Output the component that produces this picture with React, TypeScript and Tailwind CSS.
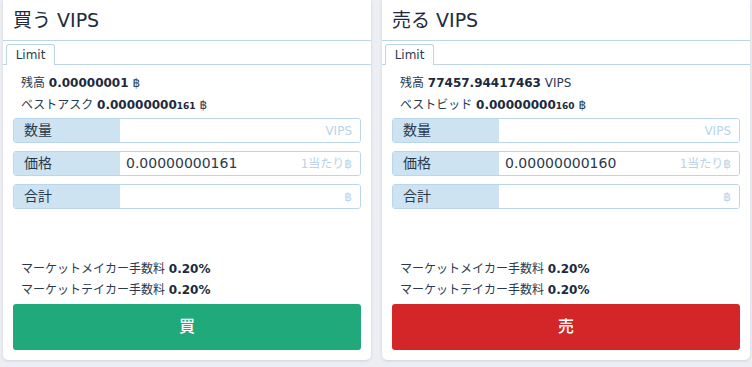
import React from 'react';

interface Field {
  label: string;
  value?: string;
  suffix: string;
}

interface PanelProps {
  title: string;
  balance: React.ReactNode;
  bestLabel: string;
  bestMain: string;
  bestSmall: string;
  price: string;
  action: string;
  buttonClass: string;
}

const Baht = () => <span className="font-normal text-[#2b3a4d]">฿</span>;

const InputRow: React.FC<{ field: Field }> = ({ field }) => (
  <div className="flex h-[25px] rounded-[3px] border border-[#bad6eb] overflow-hidden">
    <div className="w-[106px] shrink-0 bg-[#cde3f2] pl-[10px] flex items-center text-[14px] text-[#2a3a4e]">
      {field.label}
    </div>
    <div className="flex-1 flex items-center justify-between pl-[6px] pr-[8px] bg-white">
      <span className="text-[14px] text-[#2a3a4e]">{field.value ?? ''}</span>
      <span className="text-[12px] text-[#b8d3e8]">{field.suffix}</span>
    </div>
  </div>
);

const TradePanel: React.FC<PanelProps> = ({ title, balance, bestLabel, bestMain, bestSmall, price, action, buttonClass }) => {
  const fields: Field[] = [
    { label: '数量', suffix: 'VIPS' },
    { label: '価格', value: price, suffix: '1当たり฿' },
    { label: '合計', suffix: '฿' },
  ];

  return (
    <div className="flex-1 bg-white rounded-b-[5px] shadow-[0_1px_3px_rgba(40,50,80,0.15)] flex flex-col">
      <div className="h-[41px] border-b border-[#bcd6e8] flex items-center pl-[10px] text-[19px] text-[#1e2b3c]">
        {title}
      </div>
      <div className="pt-[3px] px-[3px] border-b border-[#bcd6e8] flex">
        <div className="h-[21px] w-[49px] -mb-px bg-white border border-b-0 border-[#bcd6e8] rounded-t-[3px] flex items-center justify-center text-[12px] text-[#2a3a4e]">
          Limit
        </div>
      </div>
      <div className="px-[10px] pt-[7px] pb-[10px]">
        <div className="pl-[8px] text-[12px] leading-[22px] text-[#2a3a4e]">
          <div>残高 {balance}</div>
          <div>
            {bestLabel} <span className="font-bold text-[#1c2a3c]">{bestMain}<span className="text-[9px]">{bestSmall}</span></span> <Baht />
          </div>
        </div>
        <div className="mt-[1px] flex flex-col gap-[8px]">
          {fields.map(f => (
            <InputRow key={f.label} field={f} />
          ))}
        </div>
        <div className="mt-[50px] pl-[8px] text-[12px] leading-[21px] text-[#2a3a4e]">
          <div>マーケットメイカー手数料 <span className="font-bold text-[#1c2a3c]">0.20%</span></div>
          <div>マーケットテイカー手数料 <span className="font-bold text-[#1c2a3c]">0.20%</span></div>
        </div>
        <button className={`mt-[3px] w-full h-[46px] rounded-[3px] text-white text-[16px] font-medium ${buttonClass}`}>
          {action}
        </button>
      </div>
    </div>
  );
};

export default function App() {
  return (
    <div
      className="w-[752px] h-[367px] bg-[#eceef4] flex gap-[11px] pl-[3px] pr-[2px] items-start overflow-hidden"
      style={{ fontFamily: '"DejaVu Sans", "Noto Sans CJK JP", sans-serif' }}
    >
      <TradePanel
        title="買う VIPS"
        balance={<><span className="font-bold text-[#1c2a3c]">0.00000001</span> <Baht /></>}
        bestLabel="ベストアスク"
        bestMain="0.00000000"
        bestSmall="161"
        price="0.00000000161"
        action="買"
        buttonClass="bg-[#20aa7c]"
      />
      <TradePanel
        title="売る VIPS"
        balance={<><span className="font-bold text-[#1c2a3c]">77457.94417463</span> VIPS</>}
        bestLabel="ベストビッド"
        bestMain="0.00000000"
        bestSmall="160"
        price="0.00000000160"
        action="売"
        buttonClass="bg-[#d42628]"
      />
    </div>
  );
}
